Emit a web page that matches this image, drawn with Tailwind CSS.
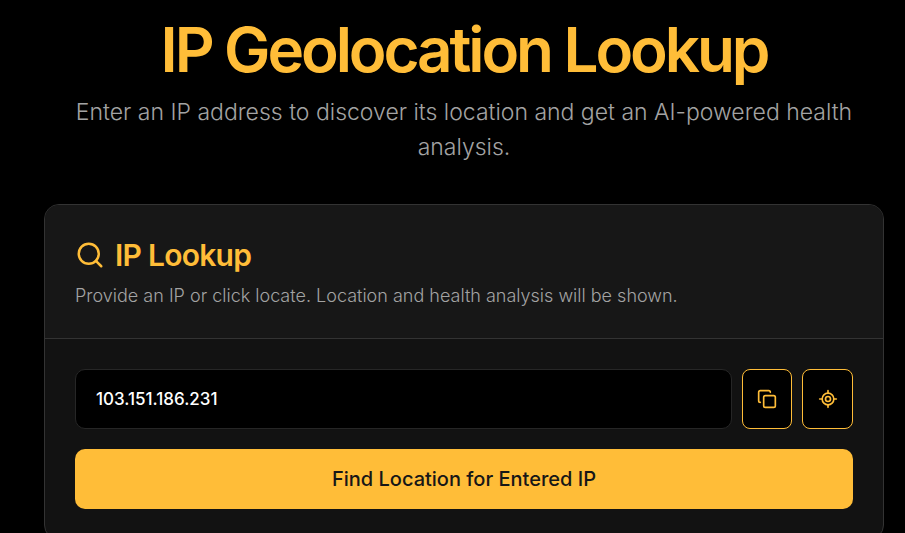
<!DOCTYPE html>
<html lang="en">
<head>
<meta charset="utf-8">
<meta name="viewport" content="width=device-width, initial-scale=1">
<title>IP Geolocation Lookup</title>
<script src="https://cdn.jsdelivr.net/npm/@tailwindcss/browser@4"></script>
</head>
<body class="bg-black font-['Inter',sans-serif] text-white overflow-x-hidden">
<main class="pl-11 pr-[21px] pt-4 pb-10">
  <header class="text-center px-5">
    <h1 class="text-[62px] leading-[68px] font-semibold tracking-tighter text-[#ffbd38]">IP Geolocation Lookup</h1>
    <p class="mt-[11px] text-[23px] leading-[35px] font-light text-[#a3a3a3]">Enter an IP address to discover its location and get an AI-powered health analysis.</p>
  </header>
  <section class="mt-[39px] rounded-[15px] border border-[#333333] bg-[#121212] overflow-hidden">
    <div class="px-[30px] pt-[30px] pb-[30px] border-b border-[#333333] bg-[#171717]">
      <h2 class="flex items-center gap-[10px] text-[30px] leading-10 font-semibold tracking-tight text-[#ffbd38]">
        <svg class="size-[30px]" viewBox="0 0 24 24" fill="none" stroke="currentColor" stroke-width="2" stroke-linecap="round" stroke-linejoin="round" aria-hidden="true"><circle cx="11" cy="11" r="8"/><path d="m21 21-4.3-4.3"/></svg>
        IP Lookup
      </h2>
      <p class="mt-2 text-[18px] leading-[25px] font-light text-[#a3a3a3]">Provide an IP or click locate. Location and health analysis will be shown.</p>
    </div>
    <form class="p-[30px]" onsubmit="return false">
      <div class="flex gap-[10px]">
        <input type="text" aria-label="IP address" value="103.151.186.231" class="min-w-0 flex-1 h-[60px] rounded-[10px] border border-[#262626] bg-black px-5 text-[17px] font-medium text-white outline-none">
        <button type="button" aria-label="Copy IP" class="flex h-[60px] w-[50px] items-center justify-center rounded-[8px] border border-[#ffbd38] bg-black text-[#ffbd38]">
          <svg class="size-5" viewBox="0 0 24 24" fill="none" stroke="currentColor" stroke-width="2" stroke-linecap="round" stroke-linejoin="round" aria-hidden="true"><rect width="14" height="14" x="8" y="8" rx="2"/><path d="M4 16c-1.1 0-2-.9-2-2V4c0-1.1.9-2 2-2h10c1.1 0 2 .9 2 2"/></svg>
        </button>
        <button type="button" aria-label="Locate my IP" class="flex h-[60px] w-[51px] items-center justify-center rounded-[8px] border border-[#ffbd38] bg-black text-[#ffbd38]">
          <svg class="size-5" viewBox="0 0 24 24" fill="none" stroke="currentColor" stroke-width="2" stroke-linecap="round" stroke-linejoin="round" aria-hidden="true"><path d="M2 12h3M19 12h3M12 2v3M12 19v3"/><circle cx="12" cy="12" r="7"/><circle cx="12" cy="12" r="3"/></svg>
        </button>
      </div>
      <button type="submit" class="mt-5 h-[60px] w-full rounded-[10px] bg-[#ffbd38] text-[20px] font-medium text-[#171717]">Find Location for Entered IP</button>
    </form>
  </section>
</main>
</body>
</html>
